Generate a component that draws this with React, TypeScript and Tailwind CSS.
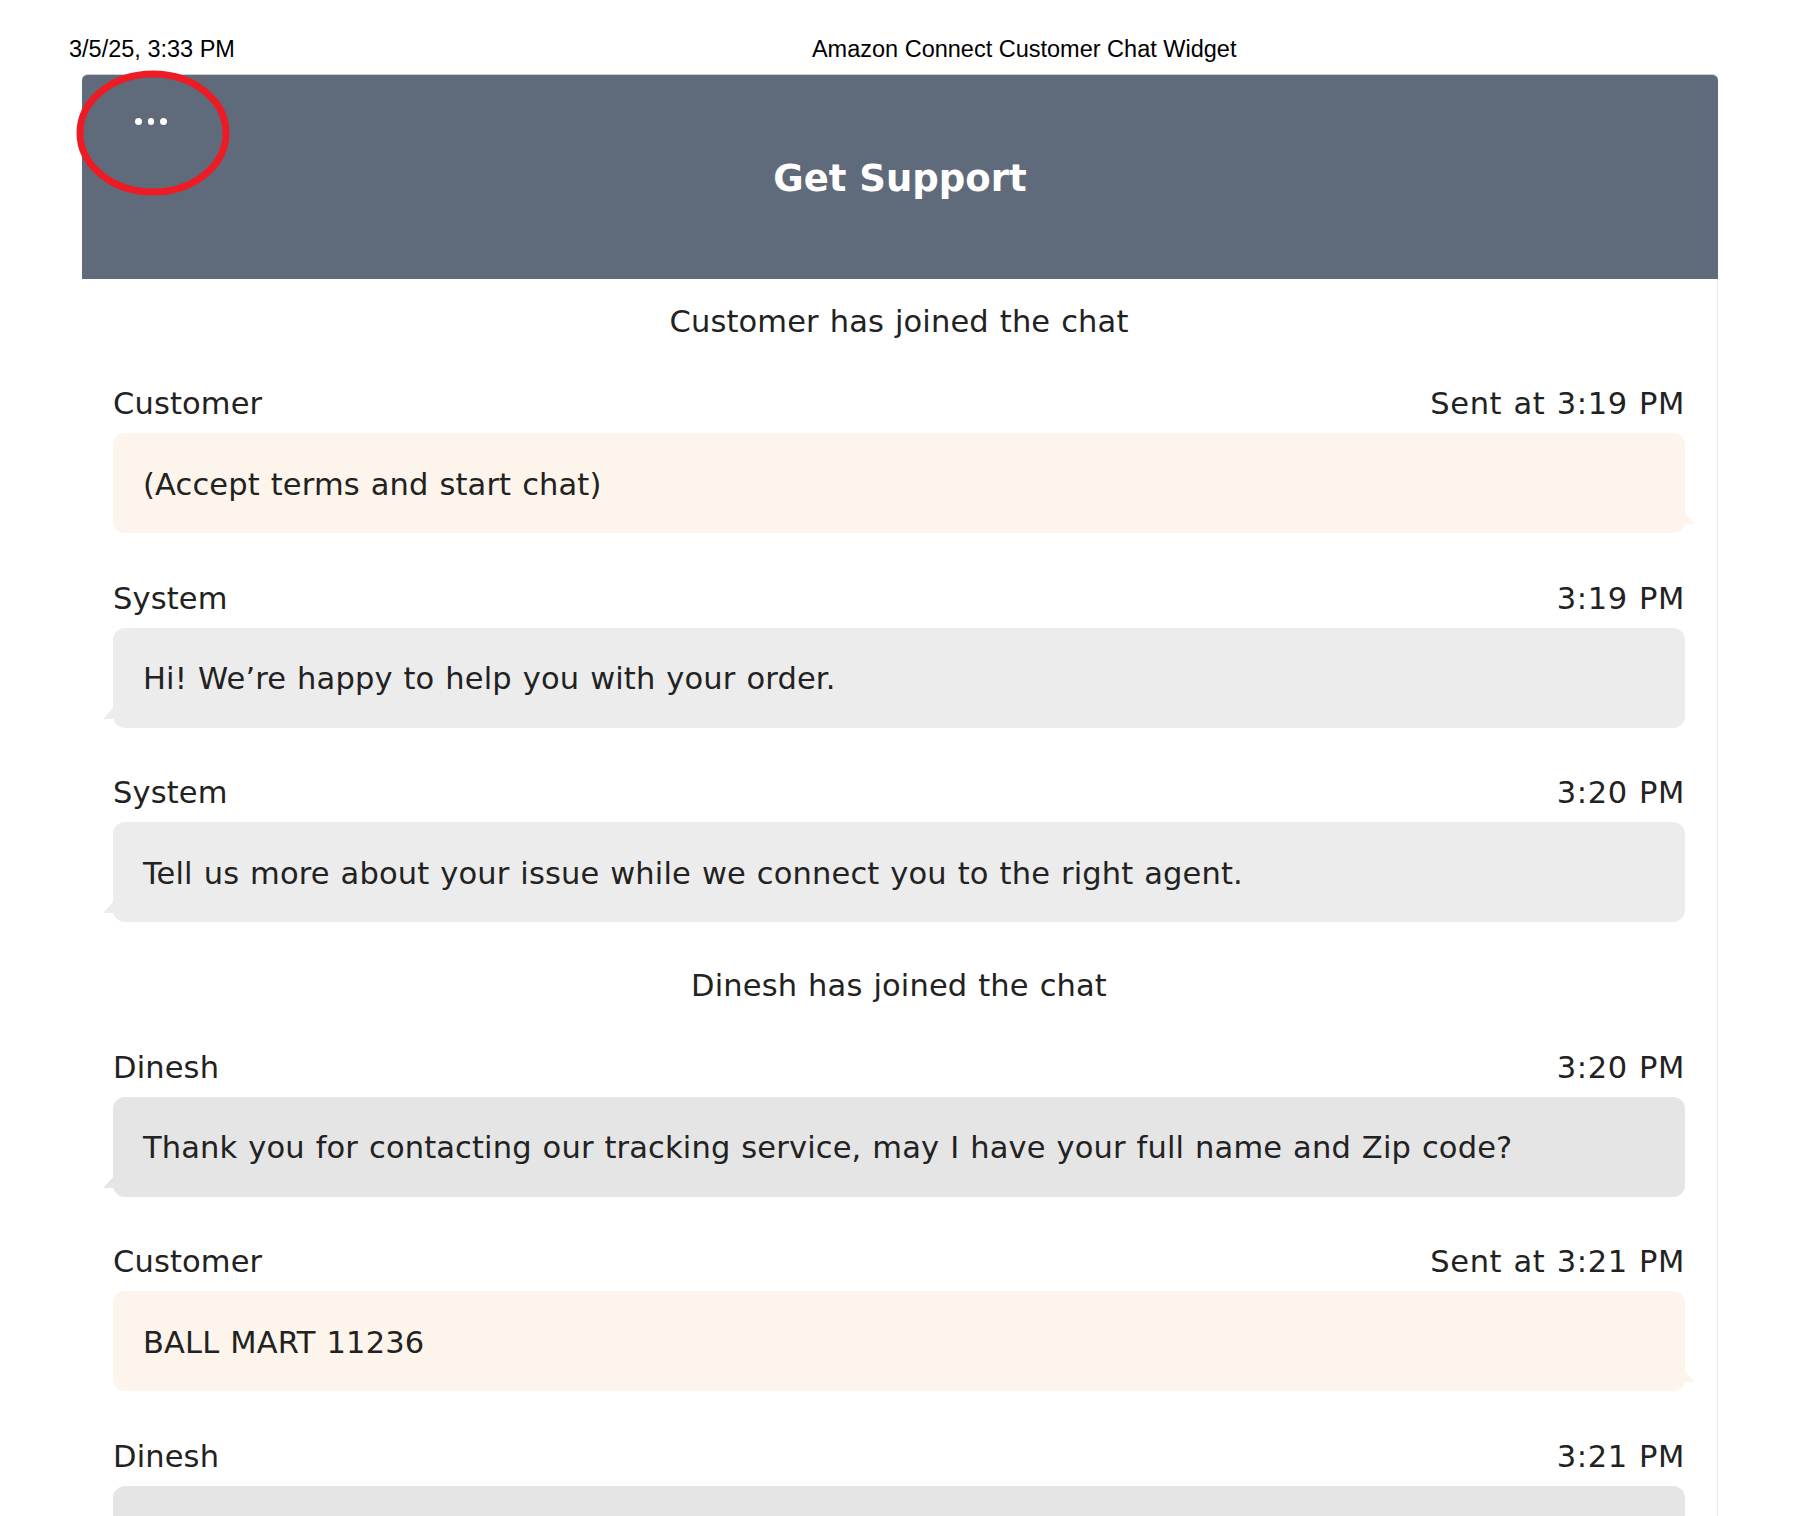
import React from "react";

type Item =
  | { kind: "joined"; text: string }
  | { kind: "msg"; who: string; time: string; text: string; side: "customer" | "system" | "agent" };

const items: Item[] = [
  { kind: "joined", text: "Customer has joined the chat" },
  { kind: "msg", who: "Customer", time: "Sent at 3:19 PM", text: "(Accept terms and start chat)", side: "customer" },
  { kind: "msg", who: "System", time: "3:19 PM", text: "Hi! We\u2019re happy to help you with your order.", side: "system" },
  { kind: "msg", who: "System", time: "3:20 PM", text: "Tell us more about your issue while we connect you to the right agent.", side: "system" },
  { kind: "joined", text: "Dinesh has joined the chat" },
  { kind: "msg", who: "Dinesh", time: "3:20 PM", text: "Thank you for contacting our tracking service, may I have your full name and Zip code?", side: "agent" },
  { kind: "msg", who: "Customer", time: "Sent at 3:21 PM", text: "BALL MART 11236", side: "customer" },
  { kind: "msg", who: "Dinesh", time: "3:21 PM", text: "", side: "agent" },
];

function Bubble({ text, side }: { text: string; side: "customer" | "system" | "agent" }) {
  const bg =
    side === "customer" ? "bg-[#fdf5eb]" : side === "system" ? "bg-[#ececec]" : "bg-[#e5e5e5]";
  const fill = side === "customer" ? "#fdf5eb" : side === "system" ? "#ececec" : "#e5e5e5";
  return (
    <div className={`relative mt-[11px] flex h-[100px] items-center rounded-[12px] px-[30px] pt-[3px] ${bg}`}>
      <span>{text}</span>
      {side === "customer" ? (
        <svg className="absolute right-[-11px] bottom-[9px]" width="12" height="12" viewBox="0 0 12 12">
          <polygon points="0,0 11,12 0,12" fill={fill} />
        </svg>
      ) : (
        <svg className="absolute left-[-11px] bottom-[9px]" width="12" height="12" viewBox="0 0 12 12">
          <polygon points="12,0 1,12 12,12" fill={fill} />
        </svg>
      )}
    </div>
  );
}

export default function App() {
  return (
    <div className="min-h-[1516px] w-[1794px] bg-white">
      <div className="flex pt-[35px] font-['Liberation_Sans',Arial,sans-serif] text-[23.5px] leading-[28px] text-black">
        <span className="ml-[69px]">3/5/25, 3:33 PM</span>
        <span className="ml-[577px]">Amazon Connect Customer Chat Widget</span>
      </div>

      <div className="ml-[82px] mt-[11px] w-[1636px] font-['DejaVu_Sans',Verdana,sans-serif]">
        <div className="relative flex h-[205px] flex-col rounded-t-[6px] border-t border-[#c9cdd3] bg-[#5f6b7a]">
          <div className="ml-[53px] mt-[43px] flex gap-[6px]">
            <span className="h-[6.5px] w-[6.5px] rounded-full bg-white" />
            <span className="h-[6.5px] w-[6.5px] rounded-full bg-white" />
            <span className="h-[6.5px] w-[6.5px] rounded-full bg-white" />
          </div>
          <div className="mt-[32px] text-center text-[37px] font-bold leading-[44px] text-white">
            Get Support
          </div>
          <svg
            className="pointer-events-none absolute left-[-6px] top-[-5px]"
            width="154"
            height="126"
            viewBox="0 0 154 126"
          >
            <ellipse cx="77" cy="63" rx="73" ry="59" fill="none" stroke="#ed1c24" strokeWidth="7" />
          </svg>
        </div>

        <div className="flex flex-col border-r border-[#ededed] pb-[40px] pl-[31px] pr-[32px] pt-[25px] text-[30.5px] leading-[36px] tracking-[0.14px] text-[#222] [word-spacing:1.1px]">
          {items.map((it, i) => {
            const prev = items[i - 1];
            let mt = "";
            if (i > 0) {
              if (prev.kind === "joined") mt = "mt-[46px]";
              else if (it.kind === "joined") mt = "mt-[45.5px]";
              else mt = "mt-[47.5px]";
            }
            if (it.kind === "joined") {
              return (
                <div key={i} className={`text-center ${mt}`}>
                  {it.text}
                </div>
              );
            }
            return (
              <div key={i} className={mt}>
                <div className="flex justify-between">
                  <span>{it.who}</span>
                  <span className="tracking-[0.6px]">{it.time}</span>
                </div>
                <Bubble text={it.text} side={it.side} />
              </div>
            );
          })}
        </div>
      </div>
    </div>
  );
}
